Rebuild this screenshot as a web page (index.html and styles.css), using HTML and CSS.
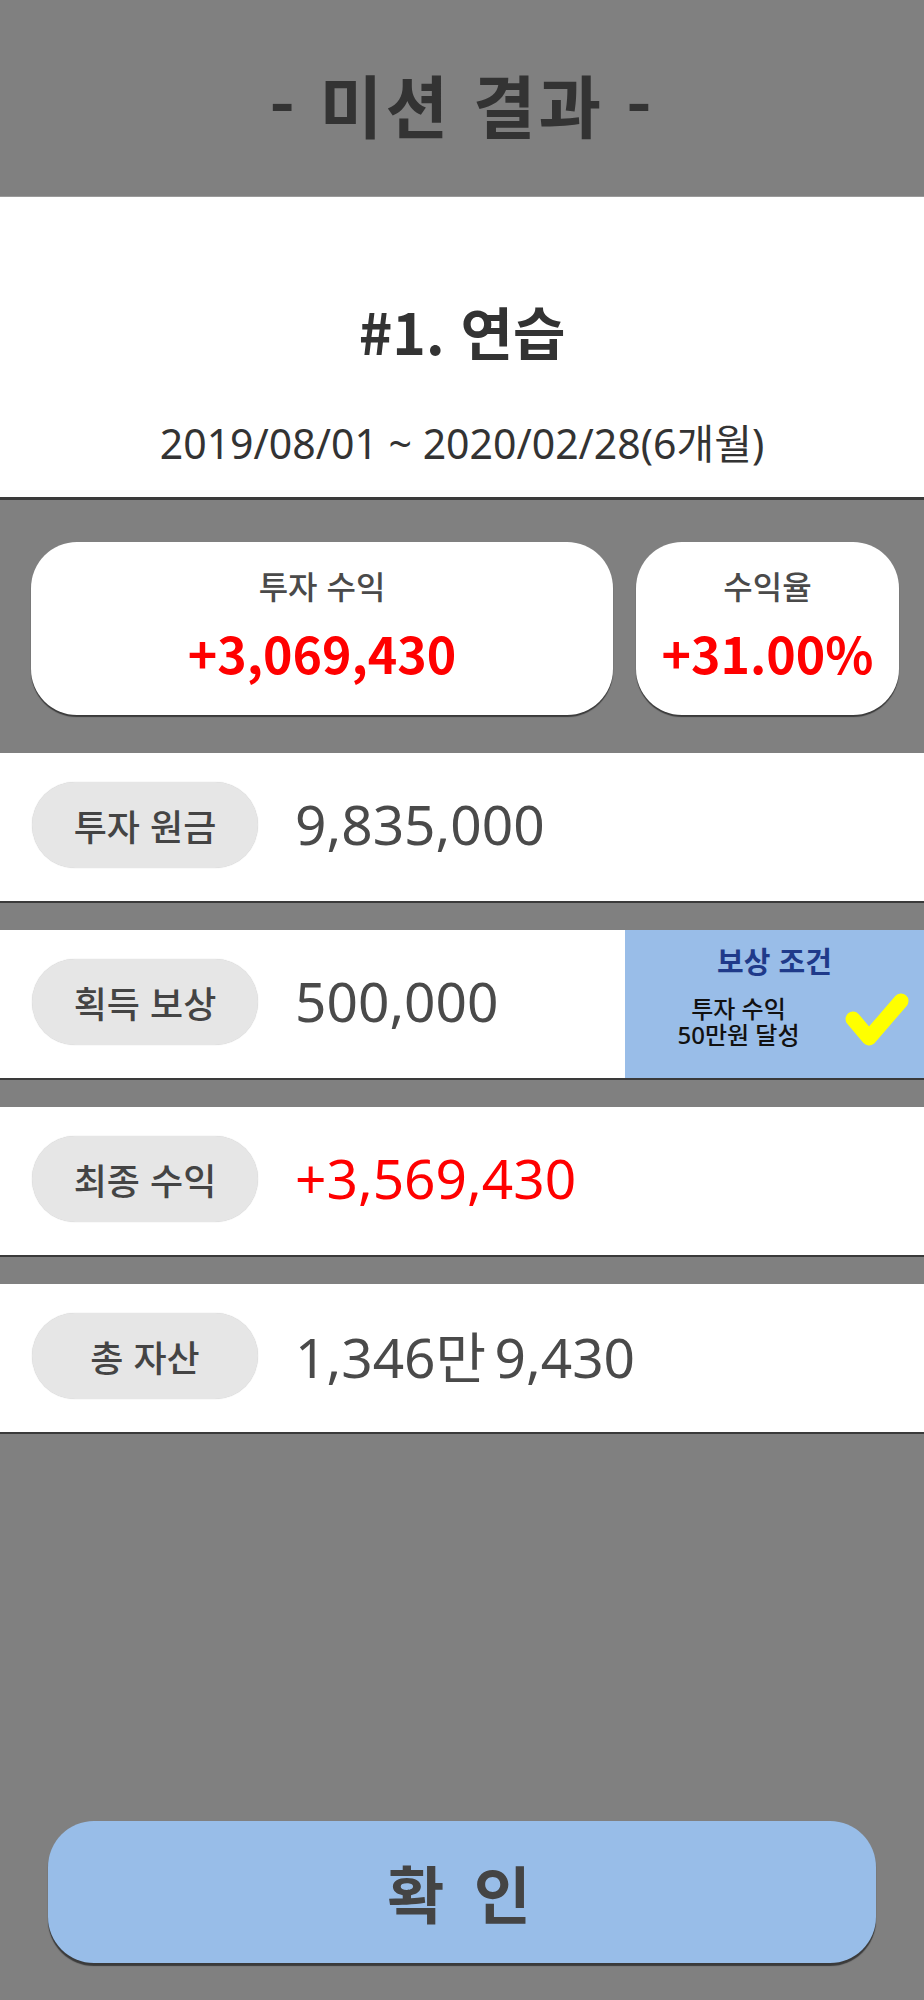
FILE: index.html
```html
<!DOCTYPE html>
<html lang="ko">
<head>
<meta charset="utf-8">
<title>미션 결과</title>
<link rel="stylesheet" href="styles.css">
</head>
<body>
<div class="page">
  <header class="header">
    <h1 class="header-title">- 미션 결과 -</h1>
  </header>

  <section class="intro">
    <h2 class="mission-title">#1. 연습</h2>
    <p class="mission-period">2019/08/01 ~ 2020/02/28(6개월)</p>
  </section>

  <section class="summary">
    <div class="card card-wide">
      <div class="card-label">투자 수익</div>
      <div class="card-value">+3,069,430</div>
    </div>
    <div class="card card-narrow">
      <div class="card-label">수익율</div>
      <div class="card-value">+31.00%</div>
    </div>
  </section>

  <section class="row">
    <div class="pill">투자 원금</div>
    <div class="row-value">9,835,000</div>
  </section>

  <section class="row">
    <div class="pill">획득 보상</div>
    <div class="row-value">500,000</div>
    <div class="reward">
      <div class="reward-title">보상 조건</div>
      <div class="reward-body">
        <div class="reward-text">
          <div class="reward-line">투자 수익</div>
          <div class="reward-line">50만원 달성</div>
        </div>
        <svg class="reward-check" width="66" height="56" viewBox="0 0 66 56">
          <polyline points="9,27 25,46 57,9" fill="none" stroke="#ffff00" stroke-width="15" stroke-linecap="round" stroke-linejoin="round"/>
        </svg>
      </div>
    </div>
  </section>

  <section class="row">
    <div class="pill">최종 수익</div>
    <div class="row-value red">+3,569,430</div>
  </section>

  <section class="row">
    <div class="pill">총 자산</div>
    <div class="row-value">1,346만<span class="thin-gap"> </span>9,430</div>
  </section>

  <div class="footer">
    <button class="confirm">확 인</button>
  </div>
</div>
</body>
</html>
```

FILE: styles.css
```css
* { box-sizing: border-box; }

html, body {
  margin: 0;
  padding: 0;
  background: #808080;
}

body {
  font-family: "Noto Sans", "Noto Sans CJK KR", sans-serif;
  color: #444;
}

.page {
  width: 924px;
  min-height: 2000px;
  display: flex;
  flex-direction: column;
}

.header {
  height: 197px;
  display: flex;
  align-items: center;
  justify-content: center;
  border-bottom: 1px solid #9a9a9a;
}

.header-title {
  margin: 0;
  font-family: "Noto Sans CJK KR", sans-serif;
  font-size: 68px;
  font-weight: 700;
  color: #333;
  letter-spacing: 3px;
  line-height: 1;
  padding-top: 12px;
}

.intro {
  height: 303px;
  background: #fff;
  border-bottom: 3px solid #3a3a3a;
  display: flex;
  flex-direction: column;
  align-items: center;
}

.mission-title {
  margin: 100px 0 0;
  font-family: "Noto Sans CJK KR", sans-serif;
  font-size: 57px;
  font-weight: 700;
  color: #333;
  line-height: 66px;
}

.mission-period {
  margin: 57px 0 0;
  font-size: 41px;
  font-weight: 400;
  color: #333;
  line-height: 46px;
}

.summary {
  height: 253px;
  display: flex;
  gap: 23px;
  padding: 42px 25px 0 31px;
}

.card {
  height: 173px;
  background: #fff;
  border-radius: 46px;
  box-shadow: 0 2px 1px rgba(0, 0, 0, 0.55);
  display: flex;
  flex-direction: column;
  align-items: center;
  padding-top: 22px;
}

.card-wide { width: 582px; }
.card-narrow { width: 263px; }

.card-label {
  font-family: "Noto Sans CJK KR", sans-serif;
  font-size: 32px;
  font-weight: 500;
  color: #4a4a4a;
  line-height: 42px;
}

.card-value {
  margin-top: 18px;
  font-family: "Noto Sans CJK KR", sans-serif;
  font-size: 50px;
  font-weight: 700;
  color: #ff0000;
  line-height: 56px;
}

.row {
  height: 150px;
  background: #fff;
  border-bottom: 2px solid #3a3a3a;
  margin-bottom: 27px;
  display: flex;
  align-items: center;
}

.pill {
  width: 226px;
  height: 86px;
  margin-left: 32px;
  margin-top: -4px;
  border-radius: 43px;
  background: #e6e6e6;
  box-shadow: 0 0 1px rgba(0, 0, 0, 0.25);
  display: flex;
  align-items: center;
  justify-content: center;
  font-family: "Noto Sans CJK KR", sans-serif;
  font-size: 36px;
  font-weight: 500;
  color: #444;
}

.row-value {
  margin-left: 37px;
  margin-top: -8px;
  font-size: 55px;
  font-weight: 400;
  color: #4a4a4a;
}

.thin-gap { letter-spacing: -6px; }

.row-value.red { color: #ff0000; }

.reward {
  margin-left: auto;
  width: 299px;
  align-self: stretch;
  background: #99bde8;
  display: flex;
  flex-direction: column;
  align-items: center;
  padding-top: 10px;
}

.reward-title {
  font-family: "Noto Sans CJK KR", sans-serif;
  font-size: 29px;
  font-weight: 700;
  color: #1f3a8a;
  line-height: 40px;
}

.reward-body {
  display: flex;
  align-items: center;
  width: 100%;
  margin-top: 12px;
}

.reward-text {
  flex: 1;
  text-align: center;
  font-size: 24px;
  font-weight: 500;
  color: #111;
  padding-left: 8px;
  padding-top: 4px;
}

.reward-line {
  height: 26px;
  line-height: 26px;
}

.reward-check {
  margin-right: 14px;
}

.footer {
  margin-top: auto;
  padding: 0 48px 37px;
}

.confirm {
  display: flex;
  align-items: center;
  justify-content: center;
  width: 828px;
  height: 142px;
  border: none;
  border-radius: 46px;
  background: #98bde8;
  box-shadow: 0 3px 1px rgba(0, 0, 0, 0.55);
  font-family: "Noto Sans CJK KR", sans-serif;
  font-size: 62px;
  font-weight: 700;
  color: #444;
  letter-spacing: 6px;
  padding-left: 6px;
}
```
